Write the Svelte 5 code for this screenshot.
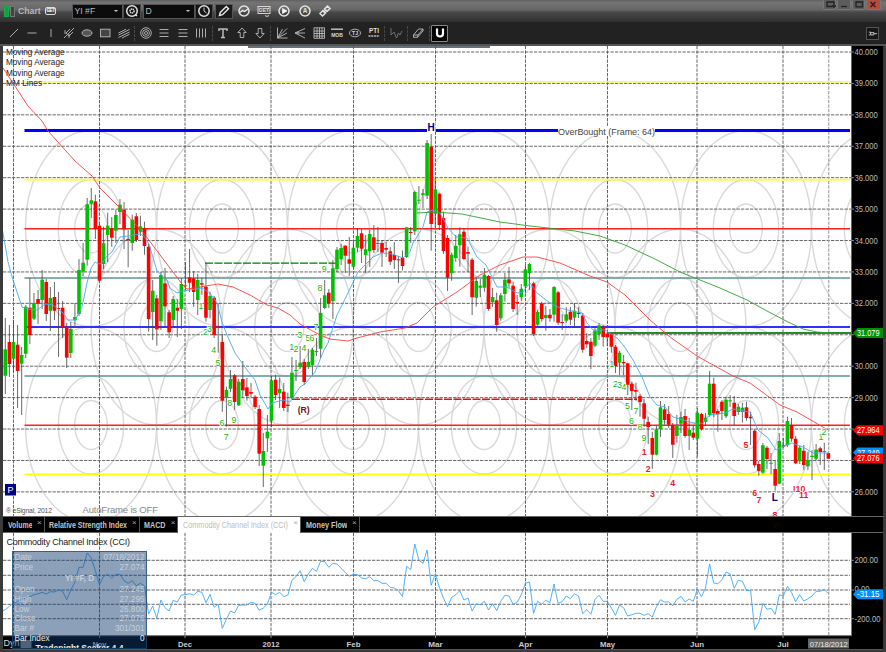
<script lang="ts">
  type Candle = { x: number; up: boolean; hi: number; top: number; bottom: number; lo: number };
  type Mark = [text: string, x: number, y: number];

  const barX = (i: number) => 5.3 + i * 4.095;

  // direction, high, body top, body bottom, low
  const raw = `g 318 349.3 375.7 394|r 325 342 364 377|g 320 342 358.7 372|r 325 344.7 371 408|g 347 355 363.7 415
g 305 306.7 353.7 358|r 278 307.7 335 344|g 293 303 318.7 320|r 290 299 303.7 324|g 270 279.7 300 309
r 279 282 314 321|g 287 298 310.7 331|r 282 297 310.7 320|r 292 308 309 357|r 301 307.7 327 338
r 323 327 357.7 368|g 322 329 353 358|g 303 317 320.3 328|g 259 270 314 316|g 243 262.7 271.7 276
g 198 204.3 259.7 265.7|g 188 200.3 203.7 218|r 194.7 201.3 229 239|r 224 225.7 280.7 281|g 226.7 243.3 264 269.3
g 212.7 225.7 235 262|r 217 228.7 237.7 246.7|g 210 215 230.7 243|g 199 204.7 212 224|r 202 209.7 229.3 249
r 230 239 240.3 267.3|g 214.7 219.7 243 250.7|r 213 216.3 240 242|g 215.7 226.3 231.7 236|r 221.7 228 246 254.7
r 244 246.7 319 331.7|g 280 290.7 312 340|r 295 298.3 329.3 345.7|g 272 275 321.3 330|r 268 283.3 306.3 327
r 310 312.3 332.3 338|g 296 299 320 327|r 299 307.7 310.7 337|g 278 284 309 329|g 262 285.3 286.3 290
r 249 277.3 282.7 292|r 271 278.3 292 306.7|g 274 280 300 315|r 277.7 283.2 284.7 295|r 263.3 286.7 317.7 321.7
g 291.7 296 310 318.3|r 296 297.7 335 338|r 303 326.3 327.7 352.7|r 334 342 400.7 411.7|g 386.7 390 398 426.7
g 370 379 388.7 392|r 374 375.3 402 410|g 379 381.7 405.3 406|r 361 379 390.3 397|r 378 387.3 396 400.7
r 383 392 393.7 397|r 395 396.7 407 409|r 405 409 453.7 466|g 433 451 465.7 487|g 415 431.7 438.3 452
g 376 380.3 420.7 427|r 374.7 379.7 395 400|g 377.7 389 393.3 408|r 383 391.7 408 411|r 392.7 404.7 406 412
g 357 372.7 398.3 399|g 360 370 371 381|g 346 362.7 367 369|r 359 362 382 385|g 349 362 367 369
g 348 349.7 365.3 375.7|g 338 351 352 356|g 298 313 348.7 358|g 280 295.3 308 309|r 289 292.7 303.3 308
g 260 268.3 301 319|g 247 249.7 269 272|g 244 248 259.3 265|r 245 245.7 255.7 273|r 237 259.3 263.7 276
g 242 247.7 266.7 268|g 228 236 247.7 252|r 229 233.3 248.7 263|g 235 249.3 255 273|g 230 234 251.3 267
r 225 237.3 250 253|g 227 243 244 252|r 240 243 252.7 267|r 242 248 249.7 257|r 247 251.3 261.7 265
r 242 255 260 269|r 256 259.3 260.3 283|r 250.5 258 266 270.5|g 227 227.3 257 258|r 227 232 233 243
g 190.7 192 231.3 235|g 186 199.7 200.7 204|g 189 193.3 195 208|g 140 143 195.7 199|r 134 146.7 224 250.7
g 178 189.3 213.7 227|r 192.7 193.7 225 230|r 211.7 218 251 254|r 235 238 277.7 291|g 252.7 254.7 273.3 280.7
g 235 246 258 261.7|g 227.3 234.3 245.3 266.7|r 228 231.7 259 260|r 246.7 252 253.7 271.7|r 258 259.7 297.3 315
g 276.7 281 297.7 306.7|g 279 285.7 287.7 297|g 268 274.7 287.7 291.7|r 275 276 309 310.7|g 288 297 302.3 306.7
r 292.7 300.3 325 331.7|g 293 295.3 318.3 320.7|g 273 279.7 294 301.7|r 267 279.3 283.3 288|r 281.7 285.7 309 312
r 295 302 303 315|g 284 288.7 297.3 300.7|g 265 269.3 286.3 293|g 263 264 273 290|r 281.7 283.3 334 336
g 310 312 324.7 328|r 301.7 303.3 319 321.7|g 306 315 318 330.7|r 309 314.7 318.3 321.7|g 286 287 314.7 321.7
r 291 292.3 322.7 325|r 314 322 323 330|g 307 314.3 320.7 323|r 307 311.7 319.7 325|g 303 310.7 317.7 328
r 307 312.7 314 318|r 313 315.7 349.7 352.7|r 333 341 344.3 348|r 338 341.7 356 369|g 328 330.7 345.7 347
g 323 325.3 334 340|r 325 326.7 337 346.7|r 332 333.7 337.3 346|r 332.7 333.7 346.7 352.7|r 345 346.7 366.3 373
g 350.7 352.7 362.7 375|r 355 362 363.3 375|r 362.7 363.3 384.7 395|r 381.7 383.7 391 410|r 382.7 390 391.7 400.7
r 394 396 402 416.7|r 399 403.3 418.7 426.7|r 416.7 422 427 444|r 431.7 438 454.7 469|g 426 429.3 454.7 455.3
g 401 407.3 429.3 437|r 404 409.3 420 424.7|r 406 414 424.7 428|r 423 425.3 444.7 458|g 415 425 436 442.7
g 411.7 417 423.7 433|r 409 416 436 437.7|g 418 430 436 450|r 425 432.7 437.7 440|g 408 412.7 438.7 456.7
r 412.7 414 429.3 430.7|g 413 417.7 422 426|g 371 383.7 415 416.7|r 377.7 383.7 413.3 417|r 409 411 414.3 431.7
r 400 401.7 411 420|g 396.7 399.7 416.3 418|g 395 400.3 401.3 407|r 396 402.7 416 425|g 404 406.7 412 415
g 403 407.7 412 422.7|r 401.7 407.3 418 420.7|r 411.7 416.7 418.3 445|r 429 430.7 465.3 467.7|r 461 464 471 476
g 443 445.3 472.7 474|r 446 447.7 459 469|g 453 462.7 463.7 474|r 460.7 469 485.7 490.7|g 433 441 483.7 484
r 438 445.3 446.7 448|g 416.7 421 445.3 447|r 418 425.3 438.7 441.7|r 436 438.7 463.3 464|g 446 447.7 461.3 464
r 445 450.7 465 470|g 451.7 460 466.3 470|g 450 455.7 457 480|g 444 449.7 458.7 460|r 446.7 448.3 452 465
g 442.7 451 452 470|r 453 453 458.7 458.7`;

  const candles: Candle[] = raw.split(/[|\n]/).map((row, i) => {
    const [dir, hi, top, bottom, lo] = row.trim().split(" ");
    return { x: barX(i), up: dir === "g", hi: +hi, top: +top, bottom: +bottom, lo: +lo };
  });

  // three units per pixel, measured down from y 514
  const cci = [
    287, 277, 268, 262, 256, 252, 248, 242, 239, 235, 240, 233, 234, 228, 232, 257, 228, 205, 160, 160,
    117, 132, 170, 212, 187, 181, 193, 181, 181, 200, 208, 200, 215, 208, 216, 300, 276, 313, 258, 281,
    291, 259, 264, 243, 242, 239, 243, 232, 235, 266, 241, 280, 270, 343, 316, 291, 297, 274, 273, 273,
    265, 268, 289, 282, 270, 235, 242, 235, 248, 243, 199, 188, 170, 203, 180, 163, 172, 142, 143, 160,
    148, 150, 163, 175, 187, 181, 182, 192, 194, 188, 200, 200, 208, 208, 220, 222, 230, 248, 157, 167,
    90, 139, 148, 108, 214, 180, 220, 253, 278, 250, 242, 230, 258, 252, 291, 270, 272, 262, 288, 269,
    290, 262, 244, 246, 271, 265, 242, 208, 204, 298, 262, 270, 259, 266, 210, 268, 263, 246, 254, 239,
    246, 299, 287, 301, 256, 244, 262, 262, 282, 304, 273, 281, 306, 302, 298, 298, 304, 299, 309, 278,
    257, 264, 264, 275, 256, 247, 264, 255, 262, 226, 248, 222, 150, 207, 209, 198, 174, 180, 223, 199,
    202, 229, 230, 347, 324, 268, 286, 283, 301, 242, 246, 217, 235, 263, 242, 261, 254, 246, 232, 232,
    227, 239,
  ];
  const cciPoints = "2.7,611 " + cci.map((v, i) => `${barX(i).toFixed(1)},${(514 + v / 3).toFixed(1)}`).join(" ");

  const fastMa =
    "2.7,231 8,262 13,280 22,307 28,309 37,310 45,304 53,305 58,309 63,313 68,320 75,320 82,307 87,283 91,268 95,262 99,264 103,262 107,256 112,252 120,237 128,236 140,234 144,236 149,244 157,271 167,280 170,288 177,293 183,291 202,288 210,293 217,303 222,322 227,335 235,353 247,370 255,380 260,395 268,409 272,403 283,400 290,402 300,387 305,384 315,372 324,350 328,343 337,315 348,293 358,272 373,257 382,253 392,254 403,258 410,252 413,243 423,227 427,212 433,210 440,213 448,228 456,237 467,238 477,257 486,265 497,287 507,287 517,293 523,292 530,283 537,293 550,303 560,308 572,311 582,313 587,323 593,330 605,330 617,338 624,346 633,360 642,377 650,397 657,405 665,407 673,417 680,419 697,424 703,423 710,415 725,413 733,409 750,412 758,430 768,438 776,450 782,447 792,443 803,447 813,453 829,453";
  const slowMa =
    "3,68 13,83 28,106 42,121 48,131 75,161 92,176 100,188 118,206 142,231 182,284 187,289 200,287 218,284 233,287 250,295 267,305 278,308 290,315 300,324 320,335 330,339 348,341 357,338 380,332 405,328 417,323 433,307 457,292 480,275 500,265 523,257 537,257 560,263 590,276 607,282 625,295 630,300 650,320 670,337 697,356 733,376 750,383 780,405 797,412 828,430";
  const longMa =
    "417,213 435,212 462,214 500,222 530,226 575,231 600,236 625,245 655,259 680,272 700,280 720,288 747,300 767,311 788,322 803,329 817,332 829,333";

  const priceRows = Array.from({ length: 15 }, (_, k) => ({ price: 40 - k, y: 52 + k * 31.42 }));
  // rows whose label sits under a price tag
  const tagged = [31, 28, 27];

  const months: Mark[] = [
    ["", 13.5, 0], ["Nov", 99.5, 14], ["Dec", 185, 14], ["2012", 271, 17], ["Feb", 353.5, 14],
    ["Mar", 435.5, 14.5], ["Apr", 525.5, 14], ["May", 607.5, 15], ["Jun", 697, 14], ["Jul", 783, 11.5],
  ];
  const levels: [y: number, color: string, width: number][] = [
    [81.7, "#ffff30", 1.6], [130.6, "#0000ff", 3], [179.7, "#ffff30", 1.8], [228.7, "#ff2020", 1.6],
    [278, "#5f9494", 1.6], [327, "#3030ff", 1.8], [376, "#5f9494", 1.6], [425.2, "#ff2020", 1.6],
    [474.3, "#ffff00", 1.8],
  ];
  const rings = [
    ...[91, 222, 353, 484, 615, 746, 877].flatMap((x) => [[x, 228.5], [x, 425]]),
    ...[156.5, 287.5, 418.5, 549.5, 680.5].map((x) => [x, 327]),
  ];

  const greenMarks: Mark[] = [
    ["1", 201, 306], ["2", 205.5, 332], ["3", 209.5, 329], ["4", 213.7, 349.5], ["5", 218, 363],
    ["8", 229.7, 402.7], ["6", 222, 422.7], ["9", 234, 420], ["7", 226.3, 436.7],
    ["1", 291.7, 346.7], ["2", 296, 349.3], ["3", 299.7, 335], ["4", 304, 348], ["5", 308, 338],
    ["6", 312, 338], ["7", 316, 327.3], ["8", 320, 287.7], ["9", 324.3, 269.3],
    ["1", 611.7, 364], ["2", 615.5, 383.5], ["3", 619.5, 384.7], ["4", 624, 386.7], ["5", 627.5, 405.7],
    ["6", 631.5, 420.7], ["7", 636, 410.7], ["8", 640, 426.7], ["9", 644, 438],
    ["1", 821, 437], ["2", 824, 431.7],
  ];
  const redMarks: Mark[] = [
    ["1", 644.3, 452], ["2", 648.3, 469], ["3", 652.5, 493.5], ["4", 672.7, 483], ["5", 746, 445.3],
    ["6", 754.7, 492.7], ["7", 759, 500], ["8", 775, 515], ["!10", 799, 489.3], ["11", 803.7, 495],
  ];

  const tools = [
    "trend", "hline", "vline", "fork", "ellipse", "rect", "channel", "|",
    "rings", "rows", "rows", "cols", "|",
    "text", "up", "down", "|",
    "gann", "fan", "grid", "mob", "tj", "pti", "|",
    "wave", "|", "eraser", "|", "magnet",
  ];
  const titleTools = ["study", "got", "play", "auto", "link"];

  const tabs = [
    { name: "Volume", width: 41.7, text: 24.5 },
    { name: "Relative Strength Index", width: 95, text: 78 },
    { name: "MACD", width: 38.7, text: 21.5 },
    { name: "Commodity Channel Index (CCI)", width: 122.6, text: 105, active: true },
    { name: "Money Flow", width: 58.8, text: 41.5 },
  ];

  const quote = [
    ["Date", "07/18/2012"], ["Price", "27.074"], ["", ""], ["Open", "27.245"], ["High", "27.295"],
    ["Low", "26.800"], ["Close", "27.076"], ["Bar #", "301/301"], ["Bar Index", "0"],
  ];
</script>

{#snippet icon(name: string)}
  <svg class="icon" viewBox="0 0 14 14">
    {#if name === "trend"}<path d="M3 11 11 3" />
    {:else if name === "hline"}<path d="M2.5 7h9" />
    {:else if name === "vline"}<path d="M7 3v8" />
    {:else if name === "fork"}<path d="M2 12 12 2M4 7l4-4M7 10l4-4M4 7l3 3M3 4v4M7 12V8" />
    {:else if name === "ellipse"}<ellipse cx="7" cy="7" rx="5" ry="3.2" fill="#555" />
    {:else if name === "rect"}<rect x="2.5" y="3.2" width="9.5" height="7.6" fill="#444" />
    {:else if name === "channel"}<path d="m1.500 9 11-5.500M1.500 11.500l11-5.500M1.500 7 9 3.200M5 12l7.500-3.800" />
    {:else if name === "rings"}<circle cx="7" cy="7" r="5.300" /><circle cx="7" cy="7" r="3.400" /><circle cx="7" cy="7" r="1.500" />
    {:else if name === "rows"}<path d="M2.500 3.500h9M2.500 7h9M2.500 10.500h9" />
    {:else if name === "cols"}<path d="M2.500 2.500v9M5.500 2.500v9M8.500 2.500v9M11.500 2.500v9" />
    {:else if name === "text"}<path class="bold" d="M3 5V3h8v2M7 3v8.500M5 11.500h4" />
    {:else if name === "up"}<path d="M7 2 2.800 6.500H5.200V11.500h3.600V6.500h2.400Z" />
    {:else if name === "down"}<path d="M7 12 2.800 7.500H5.200V2.500h3.600V7.500h2.400Z" />
    {:else if name === "gann"}<path d="M2.500 1.500v10.500h10M2.500 12 12 2.500M2.500 12l5-9M2.500 12l9.500-5" />
    {:else if name === "fan"}<path d="M2 7l10-4.500M2 7h10M2 7l10 5M5 5.500v3" />
    {:else if name === "grid"}<path d="M2 1.800h10.500v10.500H2ZM5 2v10M7.500 2v10M10 2v10M2 5h10M2 7.500h10M2 10h10" />
    {:else if name === "mob"}<path class="bold" d="M1 3.200h12" /><text x="7" y="11.300">MOB</text>
    {:else if name === "tj"}<ellipse cx="7" cy="7" rx="5.500" ry="3.800" /><text x="7" y="9">TJ</text>
    {:else if name === "pti"}<text x="7" y="7" class="big">PTI</text><path class="bold" stroke-dasharray="2 .7" d="M1.500 10h11" />
    {:else if name === "wave"}<path class="dim" d="M2 2v7l3-3 2.500 6 2-5 1.500 2 2-4" />
    {:else if name === "eraser"}<path d="m2.500 9 5-6h4.500l-5 6ZM2.500 9v2.300h4L12 5V3M7 9l-.5 2.300" />
    {:else if name === "magnet"}<path class="heavy" d="M4 2.500v5a3 3 0 0 0 6 0v-5" />
    {:else if name === "gear"}<circle cx="7" cy="7" r="5.300" class="bold" /><circle cx="7" cy="7" r="2" class="bold" stroke-dasharray="1.300 .5" /><path class="bold" d="m10 10.500 2 1.500" />
    {:else if name === "clock"}<circle cx="7" cy="7" r="5.200" class="bold" /><path d="M7 3.500V7l2.500 2" />
    {:else if name === "pencil"}<path class="bold" d="m2.500 11.500.8-3 6-6 2.200 2.200-6 6Z" />
    {:else if name === "study"}<circle cx="7" cy="7" r="5" class="bold" /><path class="bold" d="m3 8.500 2.500-2 2 1L11 5" />
    {:else if name === "got"}<rect x="1" y="2.500" width="12" height="7" /><text x="7" y="8">GET</text><path d="m8 11.500 2 1 2-1" />
    {:else if name === "play"}<circle cx="7" cy="7" r="5" class="bold" /><path class="fill" d="M5.500 4.500v5L10 7Z" />
    {:else if name === "auto"}<circle cx="7" cy="7" r="5" class="bold" /><text x="7" y="9.300" class="big">A</text>
    {:else if name === "link"}<path class="bold" d="m2 9.500 3-3 2.500 2.500-3 3ZM6.500 5l3-3L12 4.500l-3 3ZM5.500 8.500l3-3" />
    {/if}
  </svg>
{/snippet}

{#snippet tag(y: number, label: string, color: string)}
  <path d="M853 {y}l4.500-5h25.500v10h-25.500Z" fill={color} />
  <text class="tag" x="857" y={y + 3} textLength="22.500" lengthAdjust="spacingAndGlyphs">{label}</text>
{/snippet}

<div class="window">
  <header class="titlebar">
    <span class="bars"><i></i><i></i></span>
    <span class="name">Chart</span>
    <span class="badge">GET</span>
    <div class="field symbol"><span>YI #F</span><b></b></div>
    <div class="cell dark">{@render icon("gear")}</div>
    <div class="field interval"><span>D</span><b></b></div>
    <div class="cell dark">{@render icon("clock")}</div>
    <div class="cell pen">{@render icon("pencil")}</div>
    <div class="group">
      {#each titleTools as tool}<div class="cell wide">{@render icon(tool)}</div>{/each}
    </div>
    <div class="controls">
      <span><svg viewBox="0 0 12 9"><path d="M8.500 6.500H3V2h7v3M8 6h4M10 4v4" /></svg></span>
      <span><svg viewBox="0 0 12 9"><path d="M3 6.500h6" /></svg></span>
      <span><svg viewBox="0 0 12 9"><path d="M3 2h6.500v4.800H3Z" /></svg></span>
      <span class="close"><svg viewBox="0 0 12 9"><path d="m3.500 2 5 5M8.500 2l-5 5" /></svg></span>
    </div>
  </header>

  <div class="toolbar">
    {#each tools as tool}
      {#if tool === "|"}
        <span class="sep"></span>
      {:else}
        <div class="tool" class:pressed={tool === "magnet"}>{@render icon(tool)}</div>
      {/if}
    {/each}
    <div class="pin"><svg viewBox="0 0 12 12"><path d="M2 4.500h2v3H2M4 5h3.500v2.500H4M7.500 6.200H11" /></svg></div>
  </div>
  <div class="rule"></div>

  <main>
    <svg class="price" viewBox="3 46 881 471" width="881" height="471">
      <rect x="3" y="46" width="848" height="470.500" fill="#fff" />
      <rect x="248" y="46" width="242" height="2" fill="#687078" />
      <defs>
        <clipPath id="plot"><rect x="3" y="46" width="848" height="470" /></clipPath>
      </defs>
      <g clip-path="url(#plot)">
        <g class="rings">
          {#each rings as [cx, cy]}
            <ellipse {cx} {cy} rx="65.500" ry="98" />
            <ellipse {cx} {cy} rx="32.700" ry="49" />
            <ellipse {cx} {cy} rx="16.300" ry="24.500" />
          {/each}
        </g>
        <g class="grid">
          {#each priceRows as row}<path d="M3 {row.y}H851" />{/each}
          {#each months as [, x]}<path d="M{x} 46V517" />{/each}
          <path class="now" d="M828.700 46V517" />
        </g>
        {#each levels as [y, color, width]}
          <path d="M24.500 {y}H850" stroke={color} stroke-width={width} />
        {/each}
        <path d="M205 263.200H337" stroke="#007800" stroke-width="1.300" stroke-dasharray="8 1.500" />
        <path d="M292 399.300H637" stroke="#d81818" stroke-width="1.500" stroke-dasharray="8 1.500" />
        <path d="M607 333H851" stroke="#2a8a2a" stroke-width="2" />

        <text class="legend" x="6" y="54.800" textLength="58.500">Moving Average</text>
        <text class="legend" x="6" y="65.300" textLength="58.500">Moving Average</text>
        <text class="legend" x="6" y="75.800" textLength="58.500">Moving Average</text>
        <text class="legend" x="6" y="86.300" textLength="36">MM Lines</text>

        {#each candles as c}
          <path d="M{c.x} {c.hi}V{c.lo}" stroke="#444" stroke-width=".8" />
          <rect
            x={c.x - 1.8}
            y={c.top}
            width="3.600"
            height={Math.max(1, c.bottom - c.top)}
            fill={c.up ? "#00c000" : "#ff0000"}
          />
        {/each}
        <polyline points={fastMa} stroke="#45aaf5" />
        <polyline points={slowMa} stroke="#ff4040" />
        <polyline points={longMa} stroke="#30a030" />

        {#each greenMarks as [text, x, y]}
          <text class="mark green" {x} y={y + 3}>{text}</text>
        {/each}
        {#each redMarks as [text, x, y]}
          <text class="mark red" {x} y={y + 3}>{text}</text>
        {/each}
        <text class="mark maroon" x="303.700" y="412.700" textLength="12">(R)</text>
        <rect x="427" y="123" width="8.500" height="9" fill="#fff" />
        <text class="mark navy" x="431" y="130.700">H</text>
        <text class="mark navy" x="774.700" y="500.500">L</text>
        <rect x="558" y="127" width="97" height="9" fill="#fff" />
        <text class="note" x="558" y="135.300" textLength="97">OverBought (Frame: 64)</text>
        <text class="note faint" x="82.500" y="512.500" textLength="75.500">AutoFrame is OFF</text>
        <text class="copy" x="6" y="512.500" textLength="46">® eSignal, 2012</text>
        <rect x="5" y="484" width="11" height="11.500" fill="#000080" />
        <text class="flag" x="10.500" y="493">P</text>
      </g>
      <path d="M3 516.500H884M851.500 46V517" stroke="#666" />
      {#each priceRows as row}
        <path d="M851 {row.y}h3" stroke="#888" />
        {#if !tagged.includes(row.price)}
          <text class="axis" x="854.500" y={row.y + 3} textLength="23.300" lengthAdjust="spacingAndGlyphs">{row.price}.000</text>
        {/if}
      {/each}
      {@render tag(333, "31.079", "#009000")}
      {@render tag(430.3, "27.964", "#ff0000")}
      {@render tag(452.5, "27.249", "#0090ff")}
      {@render tag(458.3, "27.076", "#ff0000")}
    </svg>

    <nav>
      {#each tabs as tab}
        <div class="tab" class:active={tab.active} style:width="{tab.width}px">
          <svg width={tab.text} height="12"><text x="0" y="8.800" textLength={tab.text} lengthAdjust="spacingAndGlyphs">{tab.name}</text></svg>
          <span>×</span>
        </div>
      {/each}
    </nav>

    <svg class="study" viewBox="3 533 881 116" width="881" height="116">
      <rect x="3" y="533" width="848" height="102.500" fill="#fff" />
      <g class="grid">
        {#each [560.3, 575.3, 590, 604.3, 618.7] as y}<path d="M3 {y}H850" />{/each}
        {#each months as [, x]}<path d="M{x} 533V635" />{/each}
        <path class="now" d="M828.700 533V635" />
      </g>
      <text class="heading" x="6.500" y="545" textLength="123.500">Commodity Channel Index (CCI)</text>
      <polyline points={cciPoints} stroke="#40a8f8" />
      <path d="M3 635.700H851.500V533" stroke="#777" />
      {#each months as [label, x, w]}
        {#if label}
          <path d="M{x} 636v2" stroke="#888" />
          <text class="month" {x} y="646.700" textLength={w} lengthAdjust="spacingAndGlyphs">{label}</text>
        {/if}
      {/each}
      <rect x="808" y="638.500" width="41" height="10" fill="#666" />
      <text class="month plain" x="828.700" y="646.700" textLength="38" lengthAdjust="spacingAndGlyphs">07/18/2012</text>
      <text class="dyn" x="3.500" y="645.500">Dyn</text>
      <rect x="20.500" y="640" width="11" height="8" fill="#888" />
      <path d="M851 560.300h3M851 618.700h3M851 590h3" stroke="#888" />
      <text class="axis" x="854.500" y="563.300" textLength="23.500" lengthAdjust="spacingAndGlyphs">200.00</text>
      <text class="axis" x="854.500" y="592" textLength="15" lengthAdjust="spacingAndGlyphs">0.00</text>
      <text class="axis" x="854.500" y="621.700" textLength="26" lengthAdjust="spacingAndGlyphs">-200.00</text>
      {@render tag(594.3, "-31.15", "#0090ff")}
    </svg>

    <aside>
      {#each quote as [label, value]}
        {#if label}
          <div class="line" class:last={label === "Bar Index"}><span>{label}</span><span>{value}</span></div>
        {:else}
          <div class="ticker">YI #F, D</div>
        {/if}
      {/each}
      <div class="seeker">Tradenight Seeker 4.4</div>
    </aside>
  </main>
</div>

<style>
  :global(body) {
    background: #333;
    overflow: hidden;
  }

  .window {
    position: relative;
    width: 886px;
    height: 652px;
    display: flex;
    flex-direction: column;
    background: #3a3a3a;
    font-family: "Liberation Sans", Arial, sans-serif;
    font-size: 8.2px;
    color: #ccc;
    overflow: hidden;
  }

  .window svg {
    display: block;
    fill: none;
    flex-shrink: 0;
  }

  .titlebar {
    height: 22px;
    display: flex;
    align-items: center;
    background: linear-gradient(#606060, #747474 12%, #666 45%, #494949 55%, #303030);
    padding-left: 4px;
    box-sizing: border-box;
  }

  .bars {
    display: flex;
    gap: 1px;
    width: 14px;
  }

  .bars i {
    width: 3px;
    height: 9px;
    border: 1px solid #777;
    background: #444;
  }

  .bars i:first-child {
    border-color: #20a850;
    background: #10a040;
  }

  .name {
    width: 27px;
    font-size: 8.700px;
    font-weight: bold;
    color: #b8b8b8;
  }

  .badge {
    width: 9px;
    height: 6px;
    border: 1px solid #ddd;
    border-radius: 2px;
    font-size: 4.5px;
    line-height: 6px;
    font-weight: bold;
    text-align: center;
    color: #fff;
    letter-spacing: -0.4px;
    margin-right: 15.5px;
  }

  .field {
    height: 15px;
    display: flex;
    align-items: center;
    justify-content: space-between;
    border: 1px solid #555;
    background: #0c0c0c;
    padding: 0 4px 0 2px;
    box-sizing: border-box;
    font-size: 8.7px;
    color: #bbb;
  }

  .field b {
    border: 2px solid transparent;
    border-top-color: #ccc;
    border-bottom: 0;
  }

  .symbol {
    width: 51px;
  }

  .interval {
    width: 52px;
    margin-left: 2px;
  }

  .cell {
    width: 18px;
    height: 15px;
    display: flex;
    align-items: center;
    justify-content: center;
    box-sizing: border-box;
  }

  .dark {
    background: #151515;
    border: 1px solid #4a4a4a;
  }

  .pen {
    margin-left: 2px;
    background: #1b1b1b;
    border: 1px solid #555;
  }

  .group {
    display: flex;
    margin-left: 1px;
  }

  .wide {
    width: 20.3px;
  }

  .icon {
    width: 14px;
    height: 14px;
    stroke: #bcbcbc;
    stroke-width: 0.9;
    overflow: visible;
  }

  .titlebar .icon {
    stroke: #e4e4e4;
  }

  .icon .bold {
    stroke-width: 1.5;
  }

  .icon .heavy {
    stroke: #fff;
    stroke-width: 2.2;
  }

  .icon .dim {
    stroke: #777;
  }

  .icon .fill {
    fill: #fff;
  }

  .icon text {
    fill: #ddd;
    stroke: none;
    font-size: 5px;
    font-weight: bold;
    text-anchor: middle;
  }

  .icon .big {
    font-size: 6.5px;
  }

  .controls {
    margin-left: auto;
    margin-right: 5px;
    align-self: flex-start;
    display: flex;
    gap: 1px;
  }

  .controls span {
    width: 11.5px;
    height: 9px;
    border: 1px solid #777;
    border-top: 0;
    border-radius: 0 0 2px 2px;
    background: #5c5c5c;
  }

  .controls svg {
    width: 12px;
    height: 9px;
    stroke: #222;
    stroke-width: 1.3;
  }

  .controls .close {
    width: 13px;
    background: #b54c3e;
  }

  .toolbar {
    height: 22px;
    display: flex;
    align-items: center;
    background: #222;
    padding-left: 4.8px;
  }

  .tool {
    width: 18.3px;
    height: 17px;
    display: flex;
    align-items: center;
    justify-content: center;
    box-sizing: border-box;
  }

  .pressed {
    width: 17px;
    background: #000;
    border: 1px solid #888;
    border-radius: 1px;
  }

  .sep {
    width: 1px;
    height: 15px;
    margin: 0 1.5px;
    border-left: 1px dashed #484848;
    box-sizing: border-box;
  }

  .pin {
    width: 11px;
    height: 11px;
    margin-left: auto;
    margin-right: 7px;
    background: #161616;
    border: 1px solid #555;
  }

  .pin svg {
    width: 11px;
    height: 11px;
    stroke: #ccc;
    stroke-width: 1;
  }

  .rule {
    height: 2px;
    background: #555;
  }

  main {
    width: 880px;
    margin-left: 3px;
    background: #000;
    border-bottom: 1px solid #555;
  }

  .rings {
    stroke: #d9d9d9;
    stroke-width: 1.4;
  }

  .grid {
    stroke: #555;
    stroke-width: 0.9;
    stroke-dasharray: 3.3 1.2;
  }

  .grid .now {
    stroke: #aaa;
    stroke-width: 1.3;
  }

  .window polyline {
    stroke-width: 0.9;
  }

  .legend {
    fill: #222;
    font-size: 8.2px;
  }

  .heading {
    fill: #222;
    font-size: 9px;
  }

  .note {
    fill: #444;
    font-size: 9px;
  }

  .faint {
    fill: #888;
    font-size: 9.5px;
  }

  .copy {
    fill: #555;
    font-size: 6.8px;
  }

  .flag {
    fill: #fff;
    font-size: 9px;
    text-anchor: middle;
  }

  .mark {
    font-size: 8.8px;
    text-anchor: middle;
    paint-order: stroke;
    stroke: #fff;
    stroke-width: 1.6px;
  }

  .green {
    fill: #10b810;
  }

  .red {
    fill: #f01830;
    font-weight: bold;
  }

  .maroon {
    fill: #801020;
    font-weight: bold;
  }

  .navy {
    fill: #000080;
    font-size: 10px;
    font-weight: bold;
  }

  .axis {
    fill: #bcbcbc;
    font-size: 8.5px;
  }

  .tag {
    fill: #fff;
    font-size: 8.5px;
  }

  .month {
    fill: #ccc;
    font-size: 8px;
    font-weight: bold;
    text-anchor: middle;
  }

  .plain {
    font-weight: normal;
    fill: #eee;
  }

  .dyn {
    fill: #ddd;
    font-size: 9px;
  }

  nav {
    height: 16px;
    display: flex;
    background: #000;
    border-bottom: 1px solid #666;
    box-sizing: border-box;
  }

  .tab {
    display: flex;
    justify-content: space-between;
    padding: 1.5px 2px 0 4.7px;
    border-right: 1px solid #555;
    box-sizing: border-box;
  }

  .tab text {
    fill: #c4c4c4;
    font-size: 8.2px;
    font-weight: bold;
  }

  .tab span {
    font-size: 8px;
    line-height: 7px;
    color: #aaa;
  }

  .active {
    height: 16px;
    background: #fff;
  }

  .tab.active text {
    fill: #bcbcbc;
    font-weight: normal;
  }

  aside {
    position: absolute;
    left: 12px;
    top: 551px;
    width: 135px;
    height: 98px;
    padding: 1px 1.5px;
    box-sizing: border-box;
    border: 1px solid rgba(20, 70, 110, 0.7);
    background: rgba(14, 58, 108, 0.48);
    overflow: hidden;
    color: #c9d0d8;
  }

  .line {
    height: 9.8px;
    display: flex;
    justify-content: space-between;
    line-height: 9.8px;
  }

  .last {
    color: #eee;
  }

  .ticker {
    height: 12.5px;
    line-height: 12px;
    font-weight: bold;
    text-align: center;
  }

  .seeker {
    font-size: 8.5px;
    line-height: 9px;
    font-weight: bold;
    text-align: center;
    color: #e8e8e8;
  }
</style>
